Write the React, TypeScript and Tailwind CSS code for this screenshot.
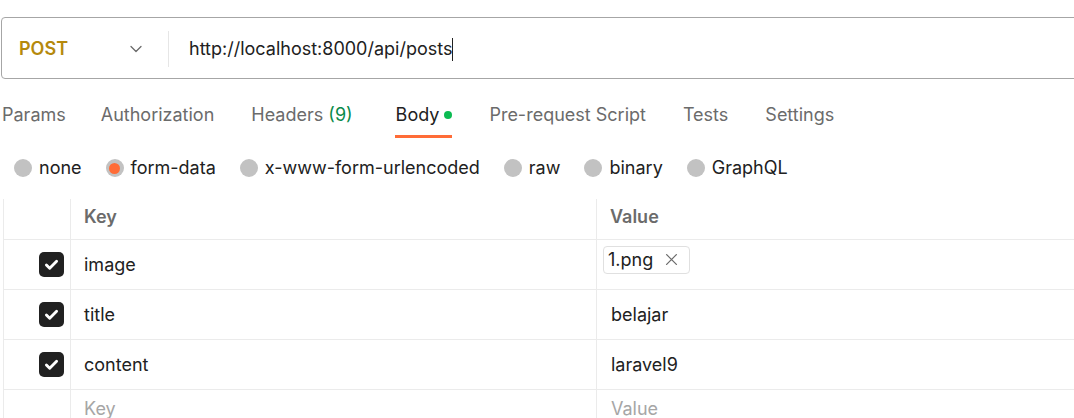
import React from "react";

const Check = () => (
  <div className="w-[25px] h-[25px] rounded-[5px] bg-[#212121] flex items-center justify-center">
    <svg width="17" height="17" viewBox="0 0 16 16" fill="none">
      <path d="M3.2 8.4l3.1 3.1L12.8 5" stroke="#fff" strokeWidth="2.7" strokeLinecap="round" strokeLinejoin="round" />
    </svg>
  </div>
);

const Radio = ({ on, label }: { on?: boolean; label: string }) => (
  <div className="flex items-center gap-[7px]">
    <div className="w-[18px] h-[18px] rounded-full bg-[#c2c2c2] flex items-center justify-center">
      {on && <div className="w-[11px] h-[11px] rounded-full bg-[#ff6c37]" />}
    </div>
    <span className="text-[18px] text-[#212121] leading-[24px]">{label}</span>
  </div>
);

const rows = [
  { key: "image", value: "chip" },
  { key: "title", value: "belajar" },
  { key: "content", value: "laravel9" },
];

export default function App() {
  return (
    <div
      className="w-[1074px] h-[418px] overflow-hidden bg-white"
      style={{ fontFamily: "Inter, 'Noto Sans', sans-serif" }}
    >
      {/* URL bar */}
      <div className="mt-[17px] ml-px w-[1100px] h-[62px] border border-[#a6a6a6] rounded-[4px] flex items-center pt-[2px]">
        <div className="w-[166px] flex items-center justify-between pl-[17px] pr-[26px]">
          <span className="text-[18px] font-semibold text-[#b5890c] leading-[24px]">POST</span>
          <svg width="12" height="8" viewBox="0 0 12 8" fill="none">
            <path d="M1 1.5l5 5 5-5" stroke="#6b6b6b" strokeWidth="1.3" strokeLinecap="round" strokeLinejoin="round" />
          </svg>
        </div>
        <div className="w-px h-[36px] bg-[#e6e6e6]" />
        <div className="pl-[20px] flex items-center">
          <span className="text-[18px] text-[#212121] leading-[24px]">http://localhost:8000/api/posts</span>
          <span className="w-px h-[23px] bg-[#212121]" />
        </div>
      </div>

      {/* Tabs */}
      <div className="mt-[24px] pl-[2px] flex items-start gap-[37px] text-[18px] leading-[24px] text-[#6b6b6b]">
        <span className="-mr-[2px]">Params</span>
        <span>Authorization</span>
        <span>
          Headers <span className="text-[#0a8a4a]">(9)</span>
        </span>
        <div className="flex flex-col ml-[6px]">
          <div className="flex items-center gap-[5px] text-[#212121]">
            <span>Body</span>
            <span className="w-[8px] h-[8px] rounded-full bg-[#0cbb52]" />
          </div>
          <div className="mt-[8px] h-[3px] bg-[#ff6c37] -ml-px" />
        </div>
        <span>Pre-request Script</span>
        <span>Tests</span>
        <span>Settings</span>
      </div>

      {/* Body types */}
      <div className="mt-[18px] pl-[14px] flex items-center gap-[24px]">
        <Radio label="none" />
        <Radio on label="form-data" />
        <Radio label="x-www-form-urlencoded" />
        <Radio label="raw" />
        <Radio label="binary" />
        <Radio label="GraphQL" />
      </div>

      {/* Table */}
      <div className="mt-[19px] ml-[3px] w-[1100px] border-l border-[#ebebeb] text-[18px] leading-[24px]">
        <div className="flex h-[41px] border-b border-[#ebebeb]">
          <div className="w-[67px] border-r border-[#ebebeb]" />
          <div className="w-[526px] border-r border-[#ebebeb] pl-[13px] pb-[4px] flex items-center font-semibold text-[#6b6b6b]">
            Key
          </div>
          <div className="flex-1 pl-[13px] pb-[4px] flex items-center font-semibold text-[#6b6b6b]">Value</div>
        </div>
        {rows.map((r) => (
          <div key={r.key} className="flex h-[50px] border-b border-[#ebebeb]">
            <div className="w-[67px] border-r border-[#ebebeb] flex items-center justify-end pr-[6px]">
              <Check />
            </div>
            <div className="w-[526px] border-r border-[#ebebeb] pl-[13px] flex items-center text-[#212121]">
              {r.key}
            </div>
            <div className="flex-1 flex items-center text-[#212121] pl-[6px]">
              {r.value === "chip" ? (
                <div className="mb-[10px] h-[28px] w-[87px] border border-[#e0e0e0] rounded-[4px] flex items-center pl-[4px] gap-[12px]">
                  <span>1.png</span>
                  <svg width="13" height="13" viewBox="0 0 12 12" fill="none">
                    <path d="M1.5 1.5l9 9M10.5 1.5l-9 9" stroke="#6b6b6b" strokeWidth="1.2" strokeLinecap="round" />
                  </svg>
                </div>
              ) : (
                <span className="pl-[8px]">{r.value}</span>
              )}
            </div>
          </div>
        ))}
        <div className="flex h-[50px]">
          <div className="w-[67px] border-r border-[#ebebeb]" />
          <div className="w-[526px] border-r border-[#ebebeb] pl-[13px] pt-[7px] text-[#a6a6a6]">Key</div>
          <div className="flex-1 pl-[14px] pt-[7px] text-[#a6a6a6]">Value</div>
        </div>
      </div>
    </div>
  );
}
